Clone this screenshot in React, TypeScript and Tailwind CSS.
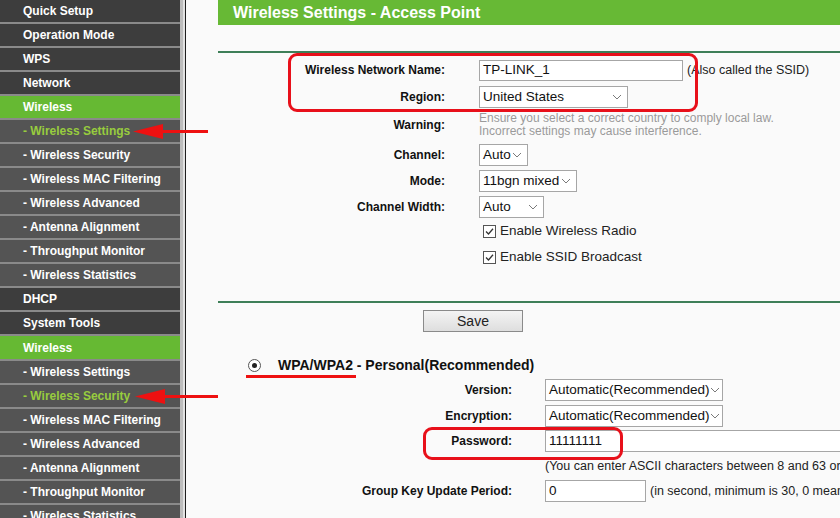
import React from "react";

type Item = { label: string; kind: "top" | "green" | "sub"; active?: boolean; h?: string };

const items: Item[] = [
  { label: "Quick Setup", kind: "top" },
  { label: "Operation Mode", kind: "top" },
  { label: "WPS", kind: "top" },
  { label: "Network", kind: "top" },
  { label: "Wireless", kind: "green" },
  { label: "- Wireless Settings", kind: "sub", active: true },
  { label: "- Wireless Security", kind: "sub" },
  { label: "- Wireless MAC Filtering", kind: "sub" },
  { label: "- Wireless Advanced", kind: "sub" },
  { label: "- Antenna Alignment", kind: "sub" },
  { label: "- Throughput Monitor", kind: "sub" },
  { label: "- Wireless Statistics", kind: "sub" },
  { label: "DHCP", kind: "top" },
  { label: "System Tools", kind: "top" },
  { label: "Wireless", kind: "green", h: "h-[25px]" },
  { label: "- Wireless Settings", kind: "sub" },
  { label: "- Wireless Security", kind: "sub", active: true },
  { label: "- Wireless MAC Filtering", kind: "sub" },
  { label: "- Wireless Advanced", kind: "sub" },
  { label: "- Antenna Alignment", kind: "sub" },
  { label: "- Throughput Monitor", kind: "sub" },
  { label: "- Wireless Statistics", kind: "sub" },
];

function Chevron() {
  return (
    <svg width="10" height="6" viewBox="0 0 10 6" className="shrink-0">
      <path d="M1 1 L5 5 L9 1" fill="none" stroke="#7a7a7a" strokeWidth="1" />
    </svg>
  );
}

function Select({ text, w }: { text: string; w: string }) {
  return (
    <div
      className={`${w} h-[22px] border border-[#a6a6a6] bg-white flex items-center justify-between pl-[3px] pr-[5px] text-[13.5px] text-[#111]`}
    >
      <span className="whitespace-nowrap">{text}</span>
      <Chevron />
    </div>
  );
}

function Check({ label }: { label: string }) {
  return (
    <div className="flex items-center pl-[4px] gap-[4px] text-[13.5px] text-[#222]">
      <div className="w-[13px] h-[13px] border border-[#555] bg-white flex items-center justify-center">
        <svg width="11" height="11" viewBox="0 0 11 11">
          <path d="M2 5.5 L4.5 8 L9 2.8" fill="none" stroke="#333" strokeWidth="1.3" />
        </svg>
      </div>
      <span>{label}</span>
    </div>
  );
}

function Arrow({ top, left, w }: { top: number; left: number; w: number }) {
  return (
    <svg
      className="absolute"
      style={{ top, left }}
      width={w}
      height="17"
      viewBox={`0 0 ${w} 17`}
    >
      <polygon points={`0,8.5 30,1 30,16`} fill="#ee1111" />
      <rect x="28" y="7" width={w - 28} height="3" fill="#ee1111" />
    </svg>
  );
}

export default function App() {
  const labelTop = "w-[227px] text-right font-bold text-[12px] text-[#111] shrink-0";
  const labelBot = "w-[294px] text-right font-bold text-[12px] text-[#111] shrink-0";
  return (
    <div className="relative w-[840px] h-[518px] overflow-hidden flex bg-[#fafafa] font-['Liberation_Sans',Arial,sans-serif]">
      <aside className="w-[180px] shrink-0 bg-[#3d3d3d] flex flex-col">
        {items.map((it, i) => (
          <div
            key={i}
            className={`${it.h ?? "h-[24px]"} shrink-0 border-b-2 border-[#8a8a8a] flex items-center pl-[23px] font-bold text-[12px] whitespace-nowrap ${
              it.kind === "green"
                ? "bg-[#66b933] text-white"
                : it.kind === "sub"
                ? "bg-[#545454] " + (it.active ? "text-[#98cc3e]" : "text-white")
                : "bg-[#3d3d3d] text-white"
            }`}
          >
            {it.label}
          </div>
        ))}
      </aside>
      <div className="w-[3px] shrink-0 bg-[#bdbdbd]" />
      <div className="w-[2px] shrink-0 bg-[#e2e2e2]" />
      <div className="w-px shrink-0 bg-[#1e1e1e]" />

      <main className="flex-1 min-w-0 pl-[32px] flex flex-col">
        <div className="h-[25px] shrink-0 bg-[#67b935] flex items-center pl-[15px] text-white font-bold text-[16px]">
          Wireless Settings - Access Point
        </div>
        <div className="mt-[26px] h-[2px] shrink-0 bg-[#3e7f58]" />

        {/* Top form */}
        <div className="flex flex-col">
          <div className="mt-[5px] h-[24px] flex items-center">
            <div className={labelTop}>Wireless Network Name:</div>
            <div className="pl-[34px] flex items-center">
              <div className="w-[204px] h-[21px] border border-[#a6a6a6] bg-white flex items-center pl-[3px] text-[13.5px] text-[#111]">
                TP-LINK_1
              </div>
              <span className="ml-[4px] text-[12.5px] text-[#222] whitespace-nowrap">(Also called the SSID)</span>
            </div>
          </div>
          <div className="mt-[3px] h-[24px] flex items-center">
            <div className={labelTop}>Region:</div>
            <div className="pl-[34px]">
              <Select text="United States" w="w-[149px]" />
            </div>
          </div>
          <div className="mt-[3px] h-[26px] flex items-center">
            <div className={labelTop}>Warning:</div>
            <div className="pl-[34px] text-[12px] leading-[13px] text-[#9a9a9a] whitespace-nowrap">
              <div>Ensure you select a correct country to comply local law.</div>
              <div>Incorrect settings may cause interference.</div>
            </div>
          </div>
          <div className="mt-[5px] h-[24px] flex items-center">
            <div className={labelTop}>Channel:</div>
            <div className="pl-[34px]">
              <Select text="Auto" w="w-[49px]" />
            </div>
          </div>
          <div className="mt-[2px] h-[24px] flex items-center">
            <div className={labelTop}>Mode:</div>
            <div className="pl-[34px]">
              <Select text="11bgn mixed" w="w-[98px]" />
            </div>
          </div>
          <div className="mt-[2px] h-[24px] flex items-center">
            <div className={labelTop}>Channel Width:</div>
            <div className="pl-[34px]">
              <Select text="Auto" w="w-[65px]" />
            </div>
          </div>
          <div className="mt-[1px] h-[22px] flex items-center pl-[261px]">
            <Check label="Enable Wireless Radio" />
          </div>
          <div className="mt-[4px] h-[22px] flex items-center pl-[261px]">
            <Check label="Enable SSID Broadcast" />
          </div>
        </div>

        <div className="mt-[33px] h-[2px] shrink-0 bg-[#3e7f58]" />

        <div className="mt-[7px] pl-[205px]">
          <button className="w-[100px] h-[22px] border border-[#8a8a8a] bg-gradient-to-b from-[#f4f4f4] to-[#dedede] text-[14px] text-[#222] flex items-center justify-center">
            Save
          </button>
        </div>

        <div className="mt-[22px] h-[22px] flex items-center pl-[30px]">
          <div className="w-[13px] h-[13px] rounded-full border border-[#555] bg-white flex items-center justify-center">
            <div className="w-[5px] h-[5px] rounded-full bg-[#222]" />
          </div>
          <span className="ml-[17px] font-bold text-[14px] text-[#111] whitespace-nowrap">
            WPA/WPA2 - Personal(Recommended)
          </span>
        </div>

        {/* Bottom form */}
        <div className="flex flex-col">
          <div className="mt-[3px] h-[22px] flex items-center">
            <div className={labelBot}>Version:</div>
            <div className="pl-[33px]">
              <Select text="Automatic(Recommended)" w="w-[178px]" />
            </div>
          </div>
          <div className="mt-[4px] h-[22px] flex items-center">
            <div className={labelBot}>Encryption:</div>
            <div className="pl-[33px]">
              <Select text="Automatic(Recommended)" w="w-[178px]" />
            </div>
          </div>
          <div className="mt-[3px] h-[22px] flex items-center">
            <div className={labelBot}>Password:</div>
            <div className="pl-[33px]">
              <div className="w-[320px] h-[22px] border border-[#a6a6a6] bg-white flex items-center pl-[3px] text-[13.5px] text-[#111]">
                11111111
              </div>
            </div>
          </div>
          <div className="mt-[5px] h-[18px] flex items-center pl-[327px] text-[12.5px] text-[#222] whitespace-nowrap overflow-hidden">
            (You can enter ASCII characters between 8 and 63 or Hexadecimal characters between 8 and 64.)
          </div>
          <div className="mt-[5px] h-[22px] flex items-center overflow-hidden">
            <div className={labelBot}>Group Key Update Period:</div>
            <div className="pl-[33px] flex items-center">
              <div className="w-[101px] h-[22px] shrink-0 border border-[#a6a6a6] bg-white flex items-center pl-[3px] text-[13.5px] text-[#111]">
                0
              </div>
              <span className="ml-[4px] text-[12.5px] text-[#222] whitespace-nowrap">
                (in second, minimum is 30, 0 means no update)
              </span>
            </div>
          </div>
        </div>
      </main>

      {/* Annotations */}
      <div className="absolute left-[288px] top-[53px] w-[410px] h-[59px] border-[3px] border-[#e8101a] rounded-[9px]" />
      <div className="absolute left-[423px] top-[427px] w-[200px] h-[33px] border-[3px] border-[#e8101a] rounded-[9px]" />
      <div className="absolute left-[246px] top-[375px] w-[110px] h-[3px] bg-[#ee1111]" />
      <Arrow top={123} left={133} w={75} />
      <Arrow top={388} left={135} w={83} />
    </div>
  );
}
